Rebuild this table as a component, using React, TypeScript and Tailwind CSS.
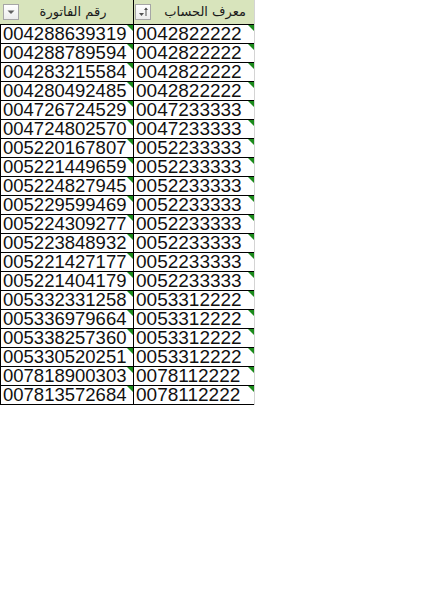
import React from "react";

const rows: [string, string][] = [
  ["004288639319", "0042822222"],
  ["004288789594", "0042822222"],
  ["004283215584", "0042822222"],
  ["004280492485", "0042822222"],
  ["004726724529", "0047233333"],
  ["004724802570", "0047233333"],
  ["005220167807", "0052233333"],
  ["005221449659", "0052233333"],
  ["005224827945", "0052233333"],
  ["005229599469", "0052233333"],
  ["005224309277", "0052233333"],
  ["005223848932", "0052233333"],
  ["005221427177", "0052233333"],
  ["005221404179", "0052233333"],
  ["005332331258", "0053312222"],
  ["005336979664", "0053312222"],
  ["005338257360", "0053312222"],
  ["005330520251", "0053312222"],
  ["007818900303", "0078112222"],
  ["007813572684", "0078112222"],
];

/* green error marker in the cell corner */
function Flag() {
  return (
    <svg className="absolute top-0 right-0" width="6" height="6" viewBox="0 0 6 6">
      <polygon points="0,0 6,0 6,6" fill="#1a8a1a" />
    </svg>
  );
}

function FilterButton({ sorted }: { sorted?: boolean }) {
  return (
    <div className="w-[16px] h-[16px] border border-[#a6a6a6] bg-gradient-to-b from-white to-[#ececec] flex items-center justify-center">
      <svg width="14" height="14" viewBox="0 0 14 14">
        {sorted ? (
          <>
            <polygon points="3,8 8,8 5.5,11" fill="#505050" />
            <line x1="10" y1="3" x2="10" y2="11" stroke="#505050" strokeWidth="1" />
            <polygon points="8,5 12,5 10,2.5" fill="#505050" />
          </>
        ) : (
          <polygon points="3.5,5.5 10.5,5.5 7,9" fill="#606060" />
        )}
      </svg>
    </div>
  );
}

export default function App() {
  return (
    <div className="w-[434px] h-[602px] bg-white" style={{ fontFamily: "'Liberation Sans', Arial, sans-serif" }}>
      <div className="w-[255px] border-r border-[#d4d4d4]">
        {/* Header */}
        <div className="flex h-[25px] bg-[#d8e4bc] border-b border-black">
          <div className="w-[134px] border-r border-black flex items-center pl-[3px]">
            <FilterButton />
            <span
              className="flex-1 text-center text-[13px] text-[#1b1b1b] pr-[6px]"
              style={{ fontFamily: "'DejaVu Sans', sans-serif" }}
              dir="rtl"
            >
              رقم الفاتورة
            </span>
          </div>
          <div className="w-[120px] flex items-center pl-[1px]">
            <FilterButton sorted />
            <span
              className="flex-1 text-right text-[13px] text-[#1b1b1b] pr-[8px]"
              style={{ fontFamily: "'DejaVu Sans', sans-serif" }}
              dir="rtl"
            >
              معرف الحساب
            </span>
          </div>
        </div>

        {/* Data rows */}
        {rows.map(([invoice, account], i) => (
          <div key={i} className="flex h-[19px] border-b border-black">
            <div className="relative w-[134px] border-l border-r border-black flex items-end pl-[2px] text-[18.5px] leading-[19px] text-[#111]">
              {invoice}
              <Flag />
            </div>
            <div className="relative w-[120px] flex items-end pl-[2px] text-[19px] leading-[19px] text-[#111]">
              {account}
              <Flag />
            </div>
          </div>
        ))}
      </div>
    </div>
  );
}
